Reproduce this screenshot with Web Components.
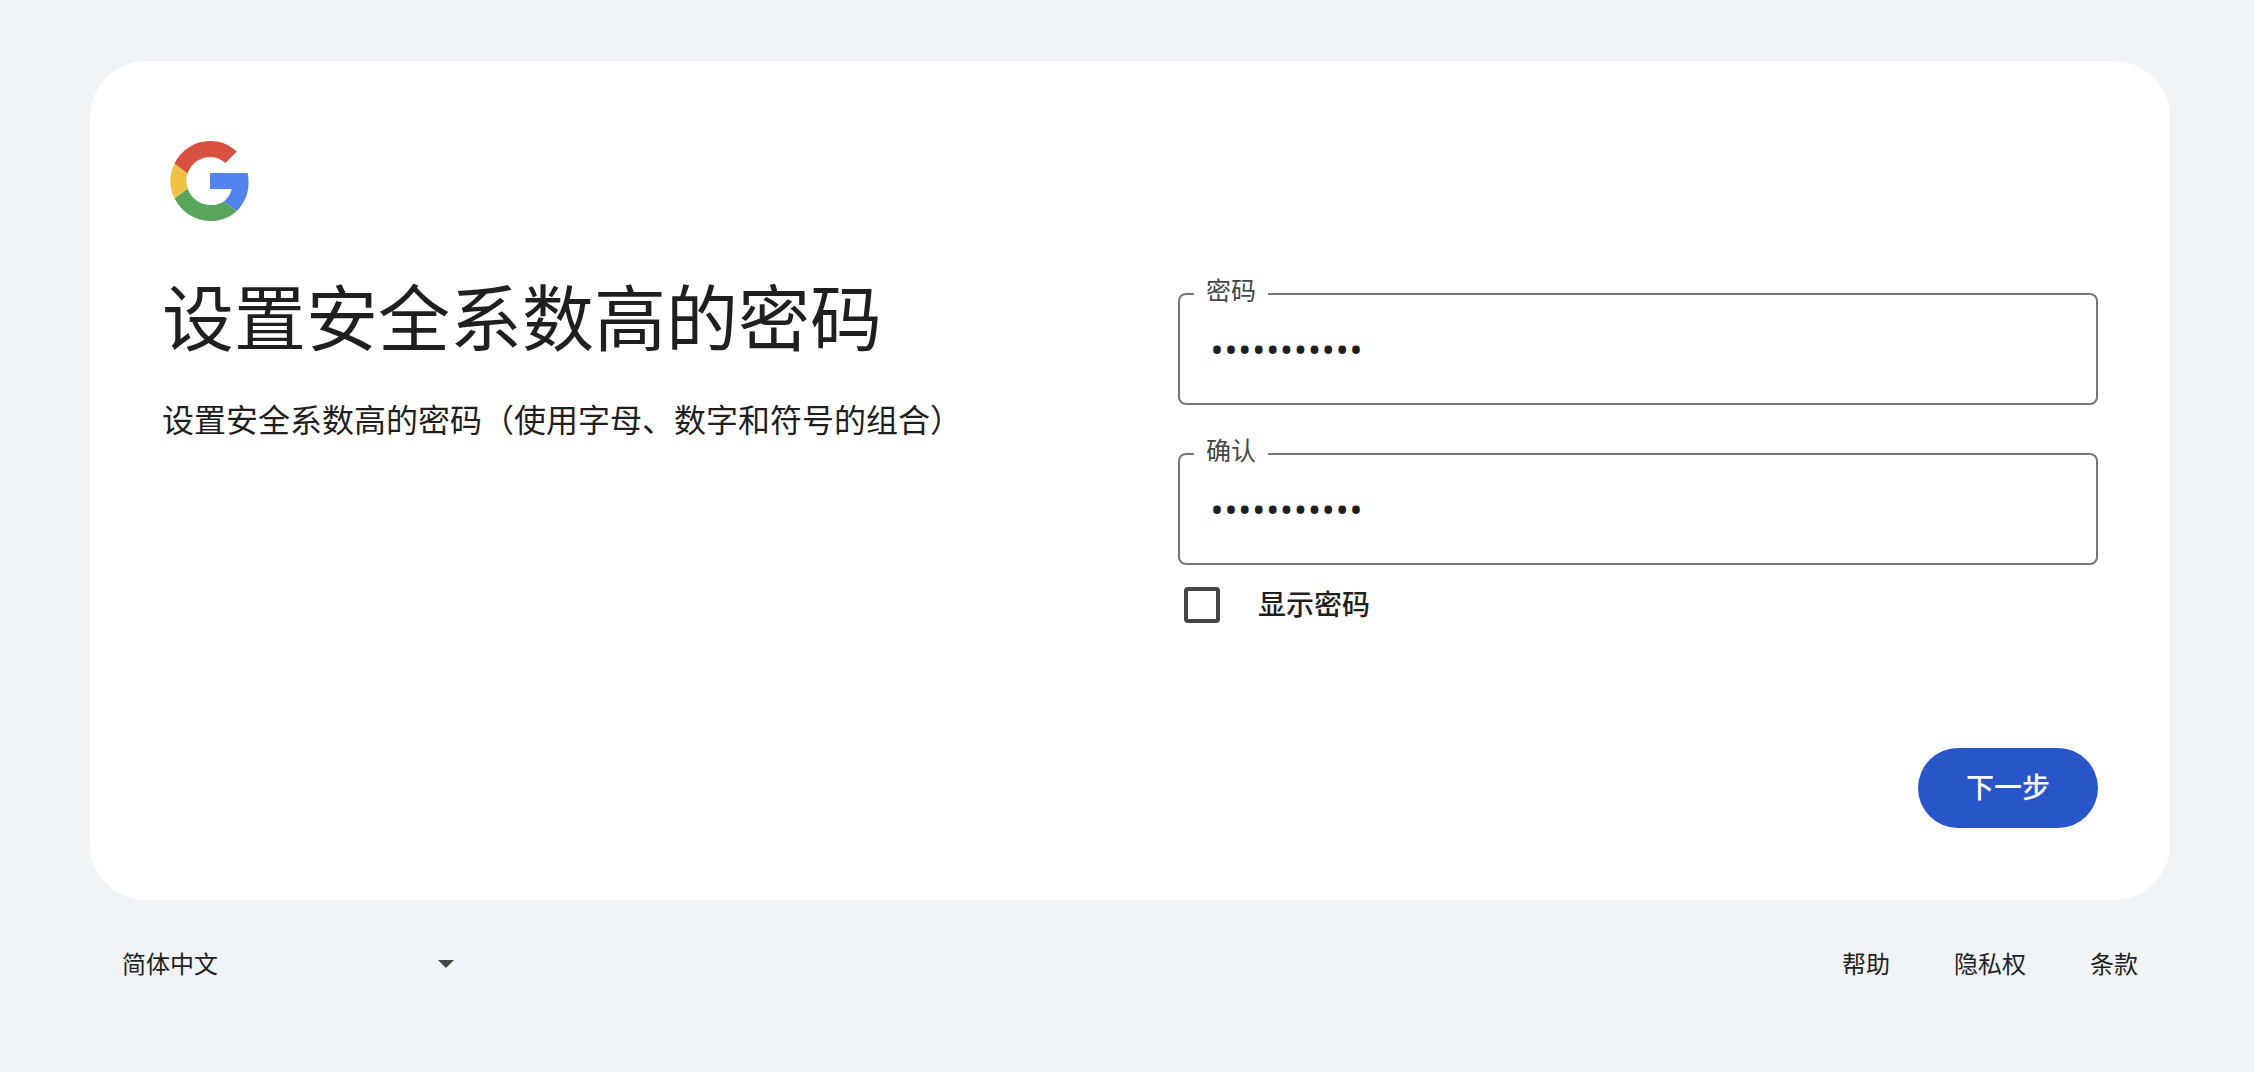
<!DOCTYPE html>
<html lang="zh-CN">
<head>
<meta charset="utf-8">
<meta name="viewport" content="width=device-width, initial-scale=1">
<title>设置安全系数高的密码</title>
<style>
  html { background: #f0f4f9; }
  body {
    margin: 0;
    padding: 61px 84px 0 90px;
    color: #1f1f1f;
    font-family: "Noto Sans CJK SC", sans-serif;
  }
</style>
</head>
<body>
<signup-page>
  <signup-card>
    <brand-logo slot="logo"></brand-logo>
    <page-heading slot="intro">
      设置安全系数高的密码
      <span slot="sub">设置安全系数高的密码（使用字母、数字和符号的组合）</span>
    </page-heading>
    <password-field slot="form" label="密码" value="Passw0rd123"></password-field>
    <password-field slot="form" label="确认" value="Passw0rd123"></password-field>
    <check-option slot="form">显示密码</check-option>
    <primary-button slot="actions">下一步</primary-button>
  </signup-card>
  <page-footer>
    <language-select slot="start"></language-select>
    <footer-link href="#help">帮助</footer-link>
    <footer-link href="#privacy">隐私权</footer-link>
    <footer-link href="#terms">条款</footer-link>
  </page-footer>
</signup-page>

<script>
  class BaseElement extends HTMLElement {
    constructor() {
      super();
      this.attachShadow({ mode: 'open' });
    }
    connectedCallback() {
      if (!this.shadowRoot.firstChild) this.shadowRoot.innerHTML = this.render();
      this.ready();
    }
    ready() {}
  }

  customElements.define('signup-page', class extends BaseElement {
    render() {
      return `<style>:host { display: flex; flex-direction: column; }</style><slot></slot>`;
    }
  });

  customElements.define('signup-card', class extends BaseElement {
    render() {
      return `
        <style>
          :host { display: block; background: #fff; border-radius: 56px; padding: 72px; }
          .columns { display: grid; grid-template-columns: 1fr 1fr; gap: 96px; padding-top: 41px; }
          .form { display: flex; flex-direction: column; padding-top: 6px; }
          .actions { display: flex; justify-content: flex-end; padding-top: 125px; }
        </style>
        <slot name="logo"></slot>
        <main class="columns">
          <div><slot name="intro"></slot></div>
          <div class="form"><slot name="form"></slot></div>
        </main>
        <div class="actions"><slot name="actions"></slot></div>`;
    }
  });

  customElements.define('brand-logo', class extends BaseElement {
    render() {
      return `
        <style>:host { display: block; } svg { display: block; width: 96px; height: 96px; }</style>
        <svg viewBox="0 0 48 48" role="img" aria-label="Google">
          <path fill="#5383ec" d="M42.8 20H24v8h10.9a11.4 11.4 0 0 1-4 6.2l6.4 4.9C41 35.6 43.3 30.500 43.300 24.500c0-1.600-.2-3.100-.5-4.500z"/>
          <path fill="#58a65c" d="M24 44c5.400 0 9.900-1.800 13.300-4.900l-6.400-4.900C29.100 35.400 26.800 36 24 36c-5.200 0-9.600-3.500-11.200-8.200l-6.500 5C9.600 39.400 16.300 44 24 44z"/>
          <path fill="#f1bf42" d="M12.800 27.800a11.900 11.900 0 0 1 0-7.600l-6.500-5a20 20 0 0 0 0 17.600z"/>
          <path fill="#d85140" d="M24 12c3 0 5.600 1 7.700 3l5.700-5.700C33.900 6 29.400 4 24 4 16.300 4 9.600 8.500 6.300 15.200l6.500 5C14.400 15.400 18.800 12 24 12z"/>
        </svg>`;
    }
  });

  customElements.define('page-heading', class extends BaseElement {
    render() {
      return `
        <style>
          :host { display: block; }
          h1 { margin: 0; font-size: 72px; line-height: 88px; font-weight: 400; }
          p { margin: 36px 0 0; font-size: 32px; line-height: 48px; }
        </style>
        <h1><slot></slot></h1>
        <p><slot name="sub"></slot></p>`;
    }
  });

  customElements.define('password-field', class extends BaseElement {
    render() {
      return `
        <style>
          :host { display: block; padding-bottom: 31px; }
          :host(:nth-of-type(2)) { padding-bottom: 22px; }
          fieldset {
            margin: 0; padding: 0 14px; min-width: 0;
            border: 2px solid #747775; border-radius: 8px;
          }
          legend { padding: 0 12px 10px; font-size: 25px; line-height: 26px; color: #444746; }
          label { display: block; }
          input {
            display: block; box-sizing: border-box; width: 100%; height: 91px;
            margin: 0; padding: 0 16px 18px; border: 0; outline: 0; background: none;
            color: #1f1f1f; font-family: "Open Sans", sans-serif; font-size: 37px;
          }
        </style>
        <fieldset>
          <legend><label for="pw">${this.getAttribute('label')}</label></legend>
          <input id="pw" type="password" autocomplete="new-password" value="${this.getAttribute('value')}">
        </fieldset>`;
    }
  });

  customElements.define('check-option', class extends BaseElement {
    render() {
      return `
        <style>
          :host { display: block; padding-left: 6px; }
          label { display: flex; align-items: center; gap: 38px; font-size: 28px; line-height: 32px; font-weight: 500; }
          span { padding-bottom: 4px; }
          input {
            appearance: none; box-sizing: border-box; width: 36px; height: 36px; margin: 0;
            border: 4px solid #444746; border-radius: 4px;
          }
          input:checked { background: #2856c9; border-color: #2856c9; }
        </style>
        <label for="show"><input id="show" type="checkbox"><span><slot></slot></span></label>`;
    }
    ready() {
      this.shadowRoot.querySelector('input').addEventListener('change', (event) => {
        document.querySelectorAll('password-field').forEach((field) => {
          field.shadowRoot.querySelector('input').type = event.target.checked ? 'text' : 'password';
        });
      });
    }
  });

  customElements.define('primary-button', class extends BaseElement {
    render() {
      return `
        <style>
          :host { display: block; }
          button {
            display: block; height: 80px; padding: 0 48px 4px; border: 0; border-radius: 40px;
            background: #2856c9; color: #fff; font: inherit; font-size: 28px; line-height: 40px; font-weight: 500;
            cursor: pointer;
          }
        </style>
        <button type="button"><slot></slot></button>`;
    }
  });

  customElements.define('page-footer', class extends BaseElement {
    render() {
      return `
        <style>
          :host { display: block; }
          footer { display: flex; justify-content: space-between; align-items: center; padding: 40px 32px 0; }
          nav { display: flex; gap: 64px; }
        </style>
        <footer><slot name="start"></slot><nav><slot></slot></nav></footer>`;
    }
  });

  customElements.define('language-select', class extends BaseElement {
    render() {
      return `
        <style>
          :host { display: grid; width: 332px; align-items: center; }
          select, svg { grid-area: 1 / 1; }
          select {
            appearance: none; height: 48px; margin: 0; padding: 0 0 2px; border: 0; background: none;
            color: inherit; font: inherit; font-size: 24px; line-height: 46px;
          }
          svg { justify-self: end; width: 16px; height: 8px; pointer-events: none; }
        </style>
        <select aria-label="语言"><option>简体中文</option></select>
        <svg viewBox="0 0 16 8" aria-hidden="true"><path fill="#444746" d="M0 0h16L8 8z"/></svg>`;
    }
  });

  customElements.define('footer-link', class extends BaseElement {
    render() {
      return `
        <style>
          :host { display: block; }
          a { display: block; padding-bottom: 2px; color: inherit; text-decoration: none; font-size: 24px; line-height: 46px; }
        </style>
        <a href="${this.getAttribute('href')}"><slot></slot></a>`;
    }
  });
</script>
</body>
</html>
